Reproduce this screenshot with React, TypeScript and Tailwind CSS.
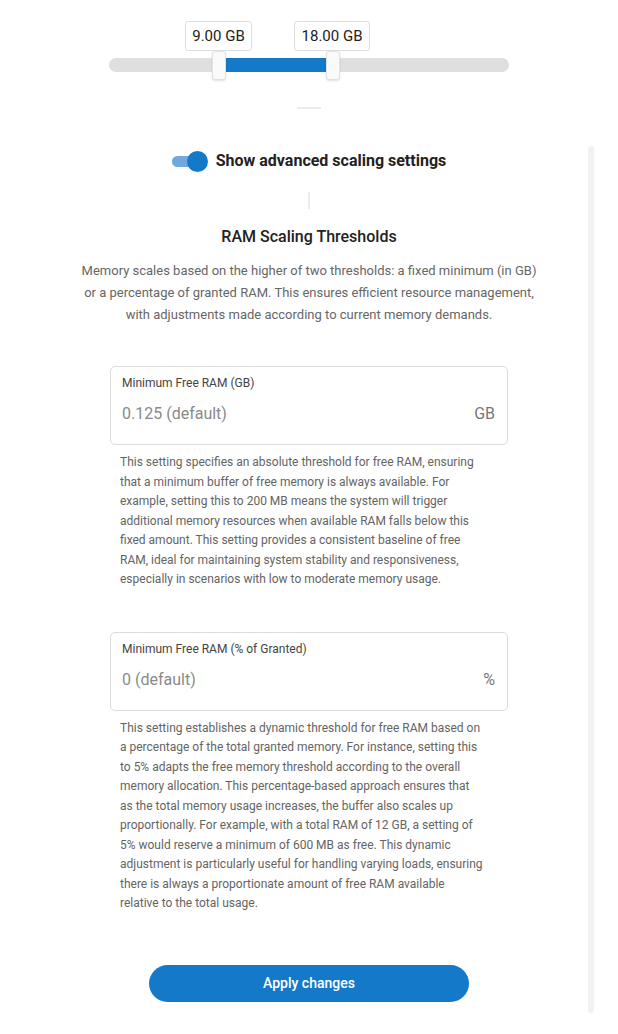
import React, { useState } from "react";

const font = { fontFamily: "Roboto, 'Liberation Sans', sans-serif" };

function RangeSlider() {
  return (
    <div className="w-[400px] mx-auto">
      <div className="relative h-[48px]">
        <div className="absolute left-[76px] top-[11px] h-[30px] w-[67px] border border-[#dedede] rounded-[3px] bg-white flex items-center justify-center text-[15px] text-[#222]">
          9.00 GB
        </div>
        <div className="absolute left-[185px] top-[11px] h-[30px] w-[76px] border border-[#dedede] rounded-[3px] bg-white flex items-center justify-center text-[15px] text-[#222]">
          18.00 GB
        </div>
      </div>
      <div className="relative h-[14px] rounded-full bg-[#dfdfdf]">
        <div className="absolute left-[111px] w-[113px] top-0 h-[14px] bg-[#1479c8]" />
        <div className="absolute left-[103px] top-[-7px] w-[14px] h-[29px] rounded-[3px] bg-[#fafafa] border border-[#e2e2e2] shadow-[0_1px_2px_rgba(0,0,0,0.12)]" />
        <div className="absolute left-[217px] top-[-7px] w-[14px] h-[29px] rounded-[3px] bg-[#fafafa] border border-[#e2e2e2] shadow-[0_1px_2px_rgba(0,0,0,0.12)]" />
      </div>
    </div>
  );
}

function Toggle({ on, onClick }: { on: boolean; onClick: () => void }) {
  return (
    <button onClick={onClick} className="relative w-[36px] h-[22px] flex items-center">
      <span className="block w-[29px] h-[11px] rounded-full bg-[#6fa9de]" />
      <span className="absolute right-0 top-[1px] w-[21px] h-[21px] rounded-full bg-[#1479c8]" />
    </button>
  );
}

function ThresholdField({ label, value, unit, help }: { label: string; value: string; unit: string; help: string }) {
  return (
    <div className="w-[398px] mx-auto">
      <div className="h-[79px] border border-[#dcdcdc] rounded-[5px] px-[11px] pt-[9px]">
        <div className="text-[12px] text-[#444] leading-[14px]">{label}</div>
        <div className="flex items-center justify-between mt-[14px] text-[16px] text-[#8a8a8a] leading-[20px]">
          <span>{value}</span>
          <span className="text-[#777] pr-[1px]">{unit}</span>
        </div>
      </div>
      <p className="pl-[10px] pr-[25px] pt-[8px] text-[12px] leading-[19.5px] text-[#646464]">{help}</p>
    </div>
  );
}

export default function App() {
  const [advanced, setAdvanced] = useState(true);

  return (
    <div className="relative w-[618px] h-[1034px] bg-white overflow-hidden" style={font}>
      <div className="absolute left-[588px] top-[146px] w-[6px] h-[867px] rounded-full bg-[#f2f2f2]" />

      <div className="flex flex-col items-center pt-[10px]">
        <RangeSlider />

        <div className="mt-[35px] w-[24px] h-[2px] bg-[#ececec]" />

        <div className="mt-[41px] flex items-center gap-[8px]">
          <Toggle on={advanced} onClick={() => setAdvanced(!advanced)} />
          <span className="text-[16px] font-bold text-[#222] leading-[20px]">Show advanced scaling settings</span>
        </div>

        <div className="mt-[20px] w-[2px] h-[17px] bg-[#ececec]" />

        <h2 className="mt-[18px] text-[16px] font-medium text-[#222] leading-[20px]">RAM Scaling Thresholds</h2>

        <p className="mt-[13px] w-[460px] text-center text-[13px] leading-[22px] text-[#666]">
          Memory scales based on the higher of two thresholds: a fixed minimum (in GB) or a percentage of granted RAM. This ensures efficient resource management, with adjustments made according to current memory demands.
        </p>

        <div className="mt-[40px] w-full">
          <ThresholdField
            label="Minimum Free RAM (GB)"
            value="0.125 (default)"
            unit="GB"
            help="This setting specifies an absolute threshold for free RAM, ensuring that a minimum buffer of free memory is always available. For example, setting this to 200 MB means the system will trigger additional memory resources when available RAM falls below this fixed amount. This setting provides a consistent baseline of free RAM, ideal for maintaining system stability and responsiveness, especially in scenarios with low to moderate memory usage."
          />
        </div>

        <div className="mt-[42px] w-full">
          <ThresholdField
            label="Minimum Free RAM (% of Granted)"
            value="0 (default)"
            unit="%"
            help="This setting establishes a dynamic threshold for free RAM based on a percentage of the total granted memory. For instance, setting this to 5% adapts the free memory threshold according to the overall memory allocation. This percentage-based approach ensures that as the total memory usage increases, the buffer also scales up proportionally. For example, with a total RAM of 12 GB, a setting of 5% would reserve a minimum of 600 MB as free. This dynamic adjustment is particularly useful for handling varying loads, ensuring there is always a proportionate amount of free RAM available relative to the total usage."
          />
        </div>

        <button className="mt-[51px] w-[320px] h-[37px] rounded-full bg-[#1479c8] text-white text-[14px] font-medium">
          Apply changes
        </button>
      </div>
    </div>
  );
}
